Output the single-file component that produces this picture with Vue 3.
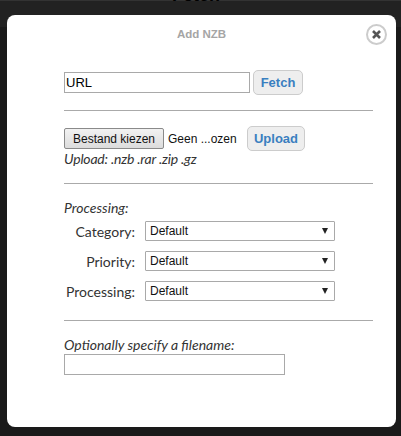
<template>
  <div class="backdrop">
    <div class="top-band"><span class="peek">Fetch</span></div>
    <div class="modal">
      <div class="modal-head">
        <h3 class="title">Add NZB</h3>
        <button class="close-btn" aria-label="Close">
          <svg width="11" height="11" viewBox="0 0 11 11">
            <path d="M2 2 L9 9 M9 2 L2 9" stroke="#555" stroke-width="2.6" fill="none" />
          </svg>
        </button>
      </div>

      <div class="modal-body">
        <div class="row url-row">
          <input class="text-input url-input" type="text" value="URL" />
          <button class="action-btn fetch-btn">Fetch</button>
        </div>
        <hr class="divider url-divider" />

        <div class="row file-row">
          <button class="file-btn">Bestand kiezen</button>
          <span class="file-name">Geen ...ozen</span>
          <button class="action-btn upload-btn">Upload</button>
        </div>
        <div class="hint upload-hint">Upload: .nzb .rar .zip .gz</div>
        <hr class="divider upload-divider" />

        <div class="hint processing-title">Processing:</div>
        <div class="options">
          <div v-for="opt in options" :key="opt" class="option">
            <label class="option-label">{{ opt }}:</label>
            <div class="select-wrap">
              <select class="select">
                <option>Default</option>
              </select>
            </div>
          </div>
        </div>
        <hr class="divider options-divider" />

        <div class="hint filename-title">Optionally specify a filename:</div>
        <input class="text-input filename-input" type="text" />
      </div>
    </div>
  </div>
</template>

<script setup>
const options = ['Category', 'Priority', 'Processing']
</script>

<style>
html, body {
  margin: 0;
  background: #1a1a1a;
}
</style>

<style scoped>
.backdrop {
  position: relative;
  width: 401px;
  height: 436px;
  background: #1a1a1a;
  overflow: hidden;
  padding: 15px 5px 9px 7px;
  box-sizing: border-box;
}
.top-band {
  position: absolute;
  top: 0;
  left: 0;
  right: 0;
  height: 27px;
  background: #222;
  border-top: 1px solid #333;
  box-sizing: border-box;
  text-align: center;
}
.peek {
  position: absolute;
  top: -16px;
  left: 172px;
  font: bold 18px "Liberation Sans", sans-serif;
  color: #000;
}
.modal {
  position: relative;
  height: 100%;
  background: #fff;
  border-radius: 8px;
  font-family: Lato, "Liberation Sans", sans-serif;
  font-size: 14px;
  color: #333;
}
.modal-head {
  height: 36px;
}
.title {
  margin: 0;
  padding-top: 11px;
  text-align: center;
  font: bold 11.5px/16px "Liberation Sans", sans-serif;
  color: #a5a5a5;
}
.close-btn {
  position: absolute;
  top: 9px;
  right: 9px;
  width: 21px;
  height: 21px;
  padding: 0;
  display: flex;
  align-items: center;
  justify-content: center;
  background: #fff;
  border: 2px solid #ccc;
  border-radius: 50%;
}
.modal-body {
  padding: 19px 23px 0 57px;
}
.row {
  display: flex;
  align-items: center;
}
.text-input {
  box-sizing: border-box;
  height: 21px;
  border: 1px solid #a9a9a9;
  padding: 0 1px;
  font: 13px "Liberation Sans", sans-serif;
  color: #000;
  outline: none;
}
.url-input {
  width: 186px;
}
.action-btn {
  box-sizing: border-box;
  height: 25px;
  padding: 0;
  background: #eee;
  border: 1px solid #ccc;
  border-radius: 5px;
  font: bold 13px "Liberation Sans", sans-serif;
  color: #3a7fc0;
}
.fetch-btn {
  width: 50px;
  margin-left: 3px;
}
.divider {
  margin: 0;
  border: 0;
  border-top: 1px solid #aaa;
}
.url-divider {
  margin-top: 15px;
}
.file-row {
  margin-top: 15px;
}
.file-btn {
  box-sizing: border-box;
  width: 100px;
  height: 21px;
  padding: 0;
  background: linear-gradient(#f2f2f2, #dcdcdc);
  border: 1px solid #8a8a8a;
  border-radius: 2px;
  font: 12px "Liberation Sans", sans-serif;
  color: #111;
}
.file-name {
  margin-left: 4px;
  width: 79px;
  font: 12px "Liberation Sans", sans-serif;
  color: #111;
}
.upload-btn {
  width: 58px;
}
.hint {
  font-style: italic;
  line-height: 16px;
  color: #333;
}
.upload-hint {
  letter-spacing: -0.2px;
}
.upload-divider {
  margin-top: 16px;
}
.processing-title {
  margin-top: 16px;
}
.options {
  display: flex;
  flex-direction: column;
  gap: 10px;
  margin-top: 5px;
}
.option {
  display: flex;
  align-items: center;
}
.option-label {
  width: 71px;
  text-align: right;
  margin-right: 10px;
}
.select-wrap {
  position: relative;
  width: 190px;
  height: 20px;
}
.select-wrap::after {
  content: "";
  position: absolute;
  top: 7px;
  right: 7px;
  border-left: 3px solid transparent;
  border-right: 3px solid transparent;
  border-top: 6px solid #222;
}
.select {
  appearance: none;
  box-sizing: border-box;
  width: 100%;
  height: 100%;
  padding: 0 4px;
  background: #fff;
  border: 1px solid #a9a9a9;
  border-radius: 1px;
  font: 12px "Liberation Sans", sans-serif;
  color: #111;
  outline: none;
}
.options-divider {
  margin-top: 19px;
}
.filename-title {
  margin-top: 16px;
}
.filename-input {
  display: block;
  margin-top: 1px;
  width: 221px;
}
</style>
